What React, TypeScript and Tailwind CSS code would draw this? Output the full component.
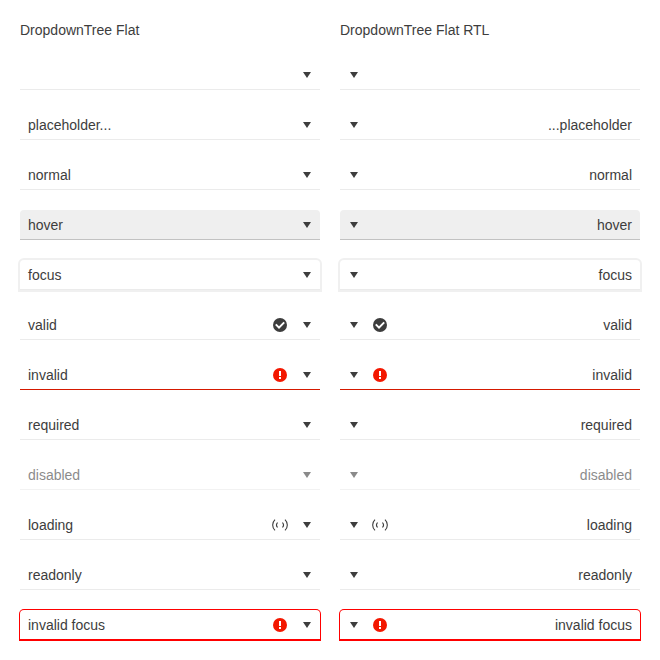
import type { ReactNode } from "react";
import clsx from "clsx";

type Row = { label: string; rtl?: string; box: string; icon?: ReactNode; dim?: boolean };

const ValidIcon = () => (
  <svg width="16" height="16" viewBox="0 0 16 16" className="block">
    <circle cx="8" cy="8" r="7" fill="#3d3d3d" />
    <path d="M3.800 7.400 7 10.600 12.200 5.400" fill="none" stroke="#fff" strokeWidth="2" />
  </svg>
);

const InvalidIcon = () => (
  <svg width="16" height="16" viewBox="0 0 16 16" className="block">
    <circle cx="8" cy="8" r="7" fill="#f31700" />
    <path d="M7 4h2v5H7zM7 10h2v2H7z" fill="#fff" />
  </svg>
);

const LoadingIcon = () => (
  <svg width="16" height="16" viewBox="0 0 16 16" className="block" fill="none" stroke="#3d3d3d" strokeWidth="1.100">
    <path d="M3 2.600C-.1 5.600-.1 10.400 3 13.400M13 2.600c3.100 3 3.100 7.800 0 10.800" />
    <path d="M5.500 5.500C4.300 6.900 4.300 9.100 5.500 10.500M10.500 5.500c1.200 1.400 1.200 3.600 0 5" />
  </svg>
);

const plain = "border-b border-[#ebebeb]";

const rows: Row[] = [
  { label: "", box: plain },
  { label: "placeholder...", rtl: "...placeholder", box: plain },
  { label: "normal", box: plain },
  { label: "hover", box: "rounded-t border-b border-[#c2c2c2] bg-[#efefef]" },
  { label: "focus", box: "rounded-t border-b border-[#ebebeb] shadow-[0_0_0_2px_#f0f0f0]" },
  { label: "valid", box: plain, icon: <ValidIcon /> },
  { label: "invalid", box: "border-b border-[#d51900]", icon: <InvalidIcon /> },
  { label: "required", box: plain },
  { label: "disabled", box: plain, dim: true },
  { label: "loading", box: plain, icon: <LoadingIcon /> },
  { label: "readonly", box: plain },
  { label: "invalid focus", box: "rounded-t border-b border-[#f00] shadow-[0_0_0_1px_#f00]", icon: <InvalidIcon /> },
];

function DropdownTree({ row, rtl }: { row: Row; rtl: boolean }) {
  return (
    <div className={clsx("flex h-[30px] items-center", rtl && "flex-row-reverse", row.box, row.dim && "opacity-60")}>
      <span className={clsx("flex-1 px-2", rtl ? "text-right" : "text-left")}>{rtl && row.rtl ? row.rtl : row.label}</span>
      {row.icon}
      <span className={clsx("flex w-8 items-center", rtl ? "justify-start pl-[10px]" : "justify-end pr-[9px]")}>
        <svg width="8" height="6" viewBox="0 0 8 6" fill="#3d3d3d" className="block">
          <path d="M0 0h8L4 6z" />
        </svg>
      </span>
    </div>
  );
}

function Column({ title, rtl }: { title: string; rtl: boolean }) {
  return (
    <section className="w-[300px]">
      <h1 className="h-10 leading-5">{title}</h1>
      <div className="flex flex-col gap-5">
        {rows.map((row, i) => (
          <DropdownTree key={i} row={row} rtl={rtl} />
        ))}
      </div>
    </section>
  );
}

export default function App() {
  return (
    <main className="flex h-[660px] w-[660px] gap-5 bg-white p-5 font-['Liberation_Sans',Arial,sans-serif] text-sm text-[#3d3d3d]">
      <Column title="DropdownTree Flat" rtl={false} />
      <Column title="DropdownTree Flat RTL" rtl={true} />
    </main>
  );
}
